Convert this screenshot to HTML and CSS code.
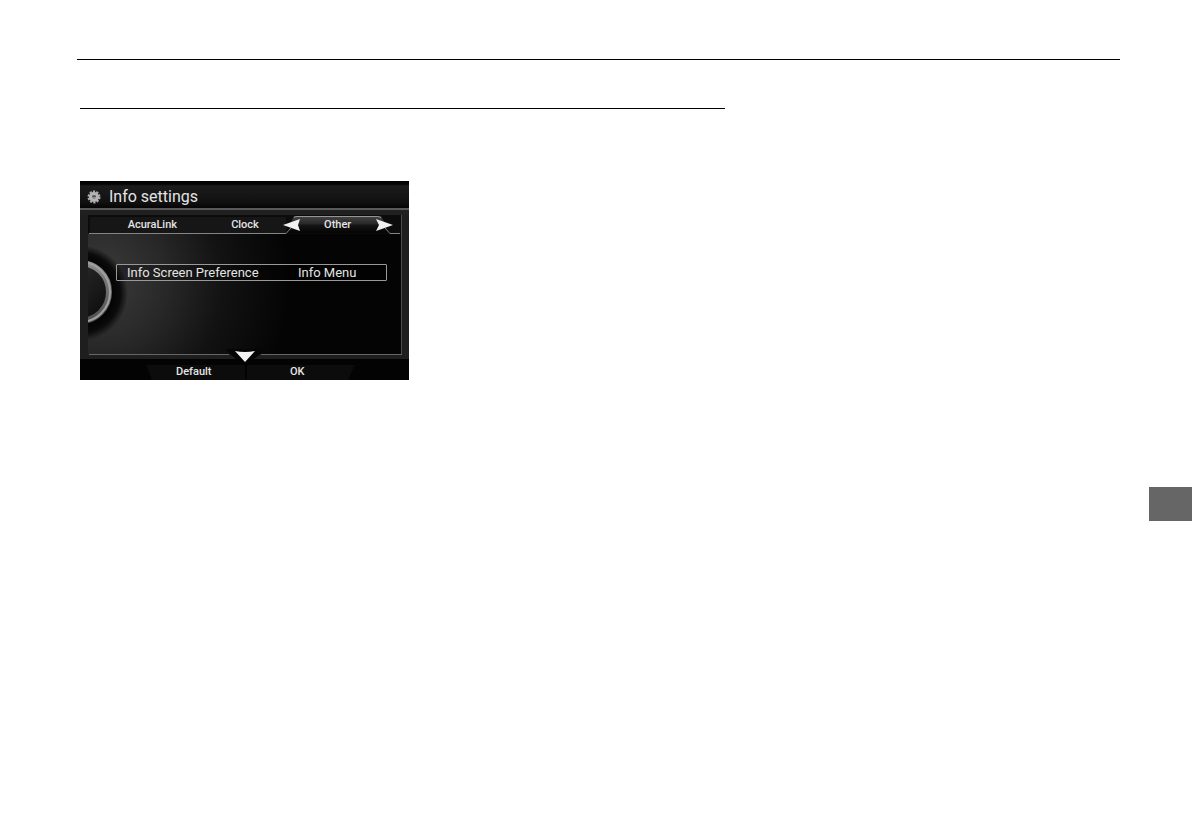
FILE: index.html
```
<!DOCTYPE html>
<html lang="en">
<head>
    <meta charset="UTF-8">
    <meta name="viewport" content="width=device-width, initial-scale=1.0">
    <title>Info settings</title>
    <link rel="stylesheet" href="styles.css">
</head>
<body>

<hr class="page-rule">

<main class="page">
    <article class="content">
        <hr class="section-rule">

        <section class="screen" aria-label="Info settings">
            <!-- Frame, dial and tab outline behind the controls -->
            <svg class="backdrop" viewBox="0 0 329 199" aria-hidden="true">
                <defs>
                    <linearGradient id="header" x1="0" y1="0" x2="0" y2="1">
                        <stop offset="0" stop-color="#000"/>
                        <stop offset="0.12" stop-color="#060606"/>
                        <stop offset="0.18" stop-color="#1c1c1c"/>
                        <stop offset="0.8" stop-color="#101010"/>
                        <stop offset="1" stop-color="#050505"/>
                    </linearGradient>
                    <radialGradient id="panel" gradientUnits="userSpaceOnUse" cx="20" cy="100" r="190">
                        <stop offset="0" stop-color="#3c3c3c"/>
                        <stop offset="0.35" stop-color="#282828"/>
                        <stop offset="0.65" stop-color="#121212"/>
                        <stop offset="1" stop-color="#040404"/>
                    </radialGradient>
                    <radialGradient id="shadow" gradientUnits="userSpaceOnUse" cx="0" cy="112" r="48">
                        <stop offset="0.7" stop-color="#050505"/>
                        <stop offset="0.84" stop-color="#0b0b0b"/>
                        <stop offset="1" stop-color="#0b0b0b" stop-opacity="0"/>
                    </radialGradient>
                    <linearGradient id="dial" x1="0" y1="0" x2="1" y2="1">
                        <stop offset="0" stop-color="#333"/>
                        <stop offset="1" stop-color="#090909"/>
                    </linearGradient>
                    <linearGradient id="ring" x1="0" y1="0" x2="0" y2="1">
                        <stop offset="0" stop-color="#8c8c8c"/>
                        <stop offset="0.5" stop-color="#6a6a6a"/>
                        <stop offset="1" stop-color="#505050"/>
                    </linearGradient>
                    <linearGradient id="tab" x1="0" y1="0" x2="0" y2="1">
                        <stop offset="0" stop-color="#444"/>
                        <stop offset="0.45" stop-color="#292929"/>
                        <stop offset="0.55" stop-color="#141414"/>
                        <stop offset="1" stop-color="#040404"/>
                    </linearGradient>
                    <clipPath id="inside">
                        <rect x="8" y="53" width="314" height="120"/>
                    </clipPath>
                </defs>

                <rect width="329" height="199" fill="#1e1e1e"/>
                <rect width="329" height="27" fill="url(#header)"/>
                <rect y="27" width="329" height="2" fill="#5a5a5a"/>
                <rect y="29" width="329" height="5" fill="#202020"/>
                <rect x="8" y="34" width="314" height="19" fill="#0b0b0b"/>
                <rect x="10" y="36" width="196" height="16" fill="#161616"/>

                <g clip-path="url(#inside)">
                    <rect x="8" y="53" width="314" height="120" fill="url(#panel)"/>
                    <circle cx="0" cy="112" r="48" fill="url(#shadow)"/>
                    <circle cx="0" cy="111" r="29" fill="url(#dial)" stroke="url(#ring)" stroke-width="6"/>
                    <circle cx="0" cy="111" r="30" fill="none" stroke="#a0a0a0" stroke-width="2"/>
                </g>

                <path d="M206 52l8-17h87l9 17z" fill="url(#tab)"/>
                <path d="M214 36.500Q215 35.500 217 35.500H297Q300 35.500 301 37" fill="none" stroke="#959595"/>
                <path d="M9 52.500H206L211 47M305 47L310 52.500H320" fill="none" stroke="#858585"/>
                <path d="M321.500 34V173" stroke="#4d4d4d"/>
                <path d="M9 173.500H149M181 173.500H322" stroke="#666"/>
                <path d="M151 174l-5-6h38l-5 6-14 11z" fill="#050505"/>
                <rect y="178" width="329" height="21" fill="#030303"/>
                <path d="M66 184h99v15H72zM167 184h108l-7 15H167z" fill="#0c0c0c"/>
            </svg>

            <div class="controls">
                <header class="title-bar">
                    <svg class="gear" viewBox="0 0 14 14" aria-hidden="true">
                        <circle cx="7" cy="7" r="5" fill="none" stroke="#aaa" stroke-width="3" stroke-dasharray="2 1.140"/>
                        <circle cx="7" cy="7" r="5" fill="#b4b4b4"/>
                        <circle cx="7" cy="7" r="2" fill="#888"/>
                        <path d="M5 7a2 2 0 0 1 4 0" fill="#555"/>
                    </svg>
                    <h1 class="title">Info settings</h1>
                </header>

                <nav class="tabs">
                    <button class="tab" type="button">AcuraLink</button>
                    <button class="tab" type="button">Clock</button>
                    <div class="current-tab">
                        <button class="tab" type="button" aria-current="true">Other</button>
                        <button class="arrow arrow-left" type="button" aria-label="Previous tab">
                            <svg viewBox="0 0 17 12"><path d="M0 6L17 0 15 6 17 12z" fill="#f0f0f0"/></svg>
                        </button>
                        <button class="arrow arrow-right" type="button" aria-label="Next tab">
                            <svg viewBox="0 0 17 12"><path d="M17 6L0 0 3 6 0 12z" fill="#f0f0f0"/></svg>
                        </button>
                    </div>
                </nav>

                <div class="settings">
                    <button class="setting" type="button">
                        <span class="setting-name">Info Screen Preference</span>
                        <span class="setting-value">Info Menu</span>
                    </button>
                    <button class="arrow arrow-down" type="button" aria-label="Move down">
                        <svg viewBox="0 0 20 11"><path d="M0 0Q10 2 20 0L10 11z" fill="#f4f4f4"/></svg>
                    </button>
                </div>

                <footer class="actions">
                    <button class="action" type="button">Default</button>
                    <button class="action" type="button">OK</button>
                </footer>
            </div>
        </section>
    </article>

    <aside class="thumb-tab"></aside>
</main>

</body>
</html>
```
FILE: styles.css
```
* {
    box-sizing: border-box;
}
body {
    margin: 0;
    background-color: #fff;
    font-family: Roboto, "Liberation Sans", sans-serif;
}
hr {
    height: 1px;
    border: none;
    background-color: #000;
}
button {
    margin: 0;
    padding: 0;
    border: none;
    background: none;
    color: #e4e4e4;
    font-family: inherit;
    cursor: pointer;
}
.page-rule {
    margin: 59px 72px 0 77px;
}
.page {
    display: flex;
    justify-content: space-between;
    padding-left: 80px;
}
.content {
    width: 58%;
    padding-top: 48px;
}
.section-rule {
    margin: 0 0 72px;
}
/* Backdrop and controls share one grid cell */
.screen {
    display: grid;
    width: 100%;
    max-width: 329px;
}
.backdrop,
.controls {
    grid-area: 1 / 1;
}
.backdrop {
    display: block;
    width: 100%;
}
.controls {
    display: grid;
    grid-template-rows: 34px 19px 1fr 21px;
}
.title-bar {
    display: flex;
    align-items: center;
    gap: 8px;
    padding: 0 7px 3px;
}
.gear {
    width: 14px;
    height: 14px;
}
.title {
    margin: 0;
    color: #e4e4e4;
    font-size: 16px;
    font-weight: 400;
    line-height: 20px;
}
.tabs {
    display: grid;
    grid-template-columns: repeat(3, 1fr);
    padding: 0 25px 0 26px;
}
.tab,
.action {
    font-size: 11px;
    font-weight: 500;
    line-height: 16px;
}
.current-tab {
    display: grid;
    position: relative;
}
.arrow {
    position: absolute;
}
.arrow svg {
    display: block;
    width: 100%;
}
.arrow-left,
.arrow-right {
    top: 4px;
    width: 17px;
}
.arrow-left {
    left: -8px;
}
.arrow-right {
    right: -9px;
}
.settings {
    position: relative;
    padding: 30px 22px 0 36px;
}
.setting {
    display: grid;
    grid-template-columns: 171px 1fr;
    align-items: center;
    width: 100%;
    height: 17px;
    padding: 0 10px;
    border: 1px solid #999;
    border-radius: 1px;
    background-color: rgba(0, 0, 0, 0.3);
    font-size: 13px;
    line-height: 15px;
    text-align: left;
}
.arrow-down {
    bottom: -3px;
    left: 50%;
    width: 20px;
    margin-left: -10px;
}
.actions {
    display: grid;
    grid-template-columns: 1fr 1fr;
    padding: 4px 60px 0 62px;
}
.thumb-tab {
    width: 43px;
    height: 34px;
    margin-top: 427px;
    background-color: #666;
}
```
